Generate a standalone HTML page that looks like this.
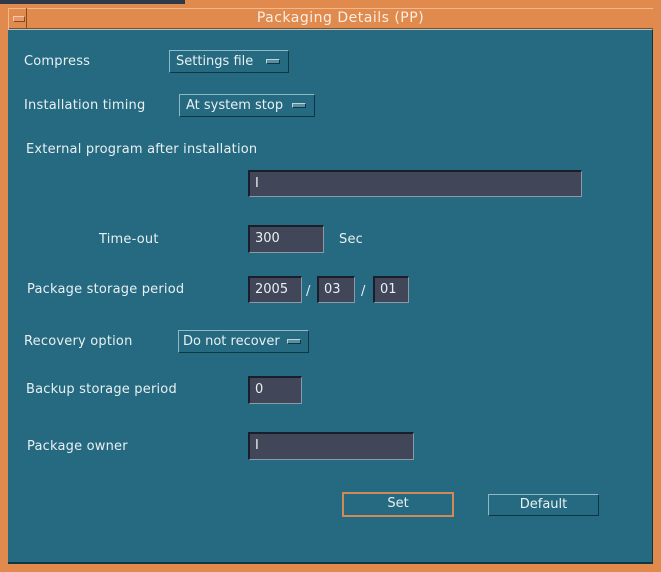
<!DOCTYPE html>
<html><head><meta charset="utf-8"><style>
*{margin:0;padding:0;box-sizing:border-box}
body{width:661px;height:572px;overflow:hidden;background:#e08a4e;font-family:"DejaVu Sans","Liberation Sans",sans-serif;font-size:13px;color:#e8f0f2;position:relative}
.a{position:absolute}
#main{left:8px;top:29px;width:645px;height:535px;background:#256a80;border-top:1px solid #a9c9d2;border-bottom:2px solid #0e3644;border-right:1px solid #0e3644}
#title{left:8px;top:8px;width:645px;height:21px;background:#e08a4e;border-top:1px solid #f3b88c;border-bottom:1px solid #8a4a20;color:#fbeee4;text-align:center;line-height:19px;font-size:14px;letter-spacing:0.5px;padding-left:20px}
#min{left:8px;top:8px;width:19px;height:21px;border-right:1px solid #8a4a20;border-left:1px solid #f3b88c}
#min:after{content:"";position:absolute;left:4px;top:8px;width:10px;height:4px;background:#e8956a;border:1px solid #f8c9a8;border-bottom-color:#8a4a20;border-right-color:#8a4a20}
.l{position:absolute;line-height:16px;white-space:nowrap;letter-spacing:0.2px}
.btn{position:absolute;background:#256a80;border:1px solid #8fb7c4;border-right-color:#0e3644;border-bottom-color:#0e3644;line-height:21px;padding-left:6px;white-space:nowrap}
.btn i{position:absolute;right:8px;top:8px;width:14px;height:5px;background:#5c8ea0;border:1px solid #b8d4dc;border-right-color:#0e3644;border-bottom-color:#0e3644}
.f{position:absolute;background:#414659;border:1px solid #1a1e2a;border-right-color:#8a9aa8;border-bottom-color:#8a9aa8;border-top:2px solid #1a1e2a;border-left:2px solid #1a1e2a;line-height:23px;padding-left:5px;white-space:nowrap}
.pb{position:absolute;text-align:center;line-height:20px;background:#256a80;border:1px solid #8fb7c4;border-right-color:#0e3644;border-bottom-color:#0e3644}
</style></head><body>
<div class="a" style="left:0;top:0;width:185px;height:4px;background:#2e3a4a"></div>
<div class="a" id="main"></div>
<div class="a" id="title">Packaging Details (PP)</div>
<div class="a" id="min"></div>

<div class="l" style="left:24px;top:54px">Compress</div>
<div class="btn" style="left:169px;top:50px;width:120px;height:23px">Settings file<i></i></div>
<div class="l" style="left:24px;top:98px">Installation timing</div>
<div class="btn" style="left:179px;top:94px;width:136px;height:23px">At system stop<i></i></div>
<div class="l" style="left:26px;top:142px">External program after installation</div>
<div class="f" style="left:248px;top:170px;width:334px;height:27px">I</div>
<div class="l" style="left:99px;top:232px">Time-out</div>
<div class="f" style="left:248px;top:225px;width:76px;height:28px">300</div>
<div class="l" style="left:339px;top:232px">Sec</div>
<div class="l" style="left:27px;top:282px">Package storage period</div>
<div class="f" style="left:248px;top:276px;width:54px;height:27px">2005</div>
<div class="l" style="left:306px;top:284px">/</div>
<div class="f" style="left:317px;top:276px;width:38px;height:27px">03</div>
<div class="l" style="left:361px;top:284px">/</div>
<div class="f" style="left:373px;top:276px;width:36px;height:27px">01</div>
<div class="l" style="left:24px;top:334px">Recovery option</div>
<div class="btn" style="left:178px;top:330px;width:131px;height:23px;padding-left:4px">Do not recover<i style="right:7px"></i></div>
<div class="l" style="left:26px;top:382px">Backup storage period</div>
<div class="f" style="left:248px;top:376px;width:54px;height:28px">0</div>
<div class="l" style="left:27px;top:439px">Package owner</div>
<div class="f" style="left:248px;top:432px;width:166px;height:28px">I</div>

<div class="pb" style="left:342px;top:492px;width:112px;height:25px;border:2px solid #d08a58">Set</div>
<div class="pb" style="left:488px;top:494px;width:111px;height:22px">Default</div>
</body></html>
